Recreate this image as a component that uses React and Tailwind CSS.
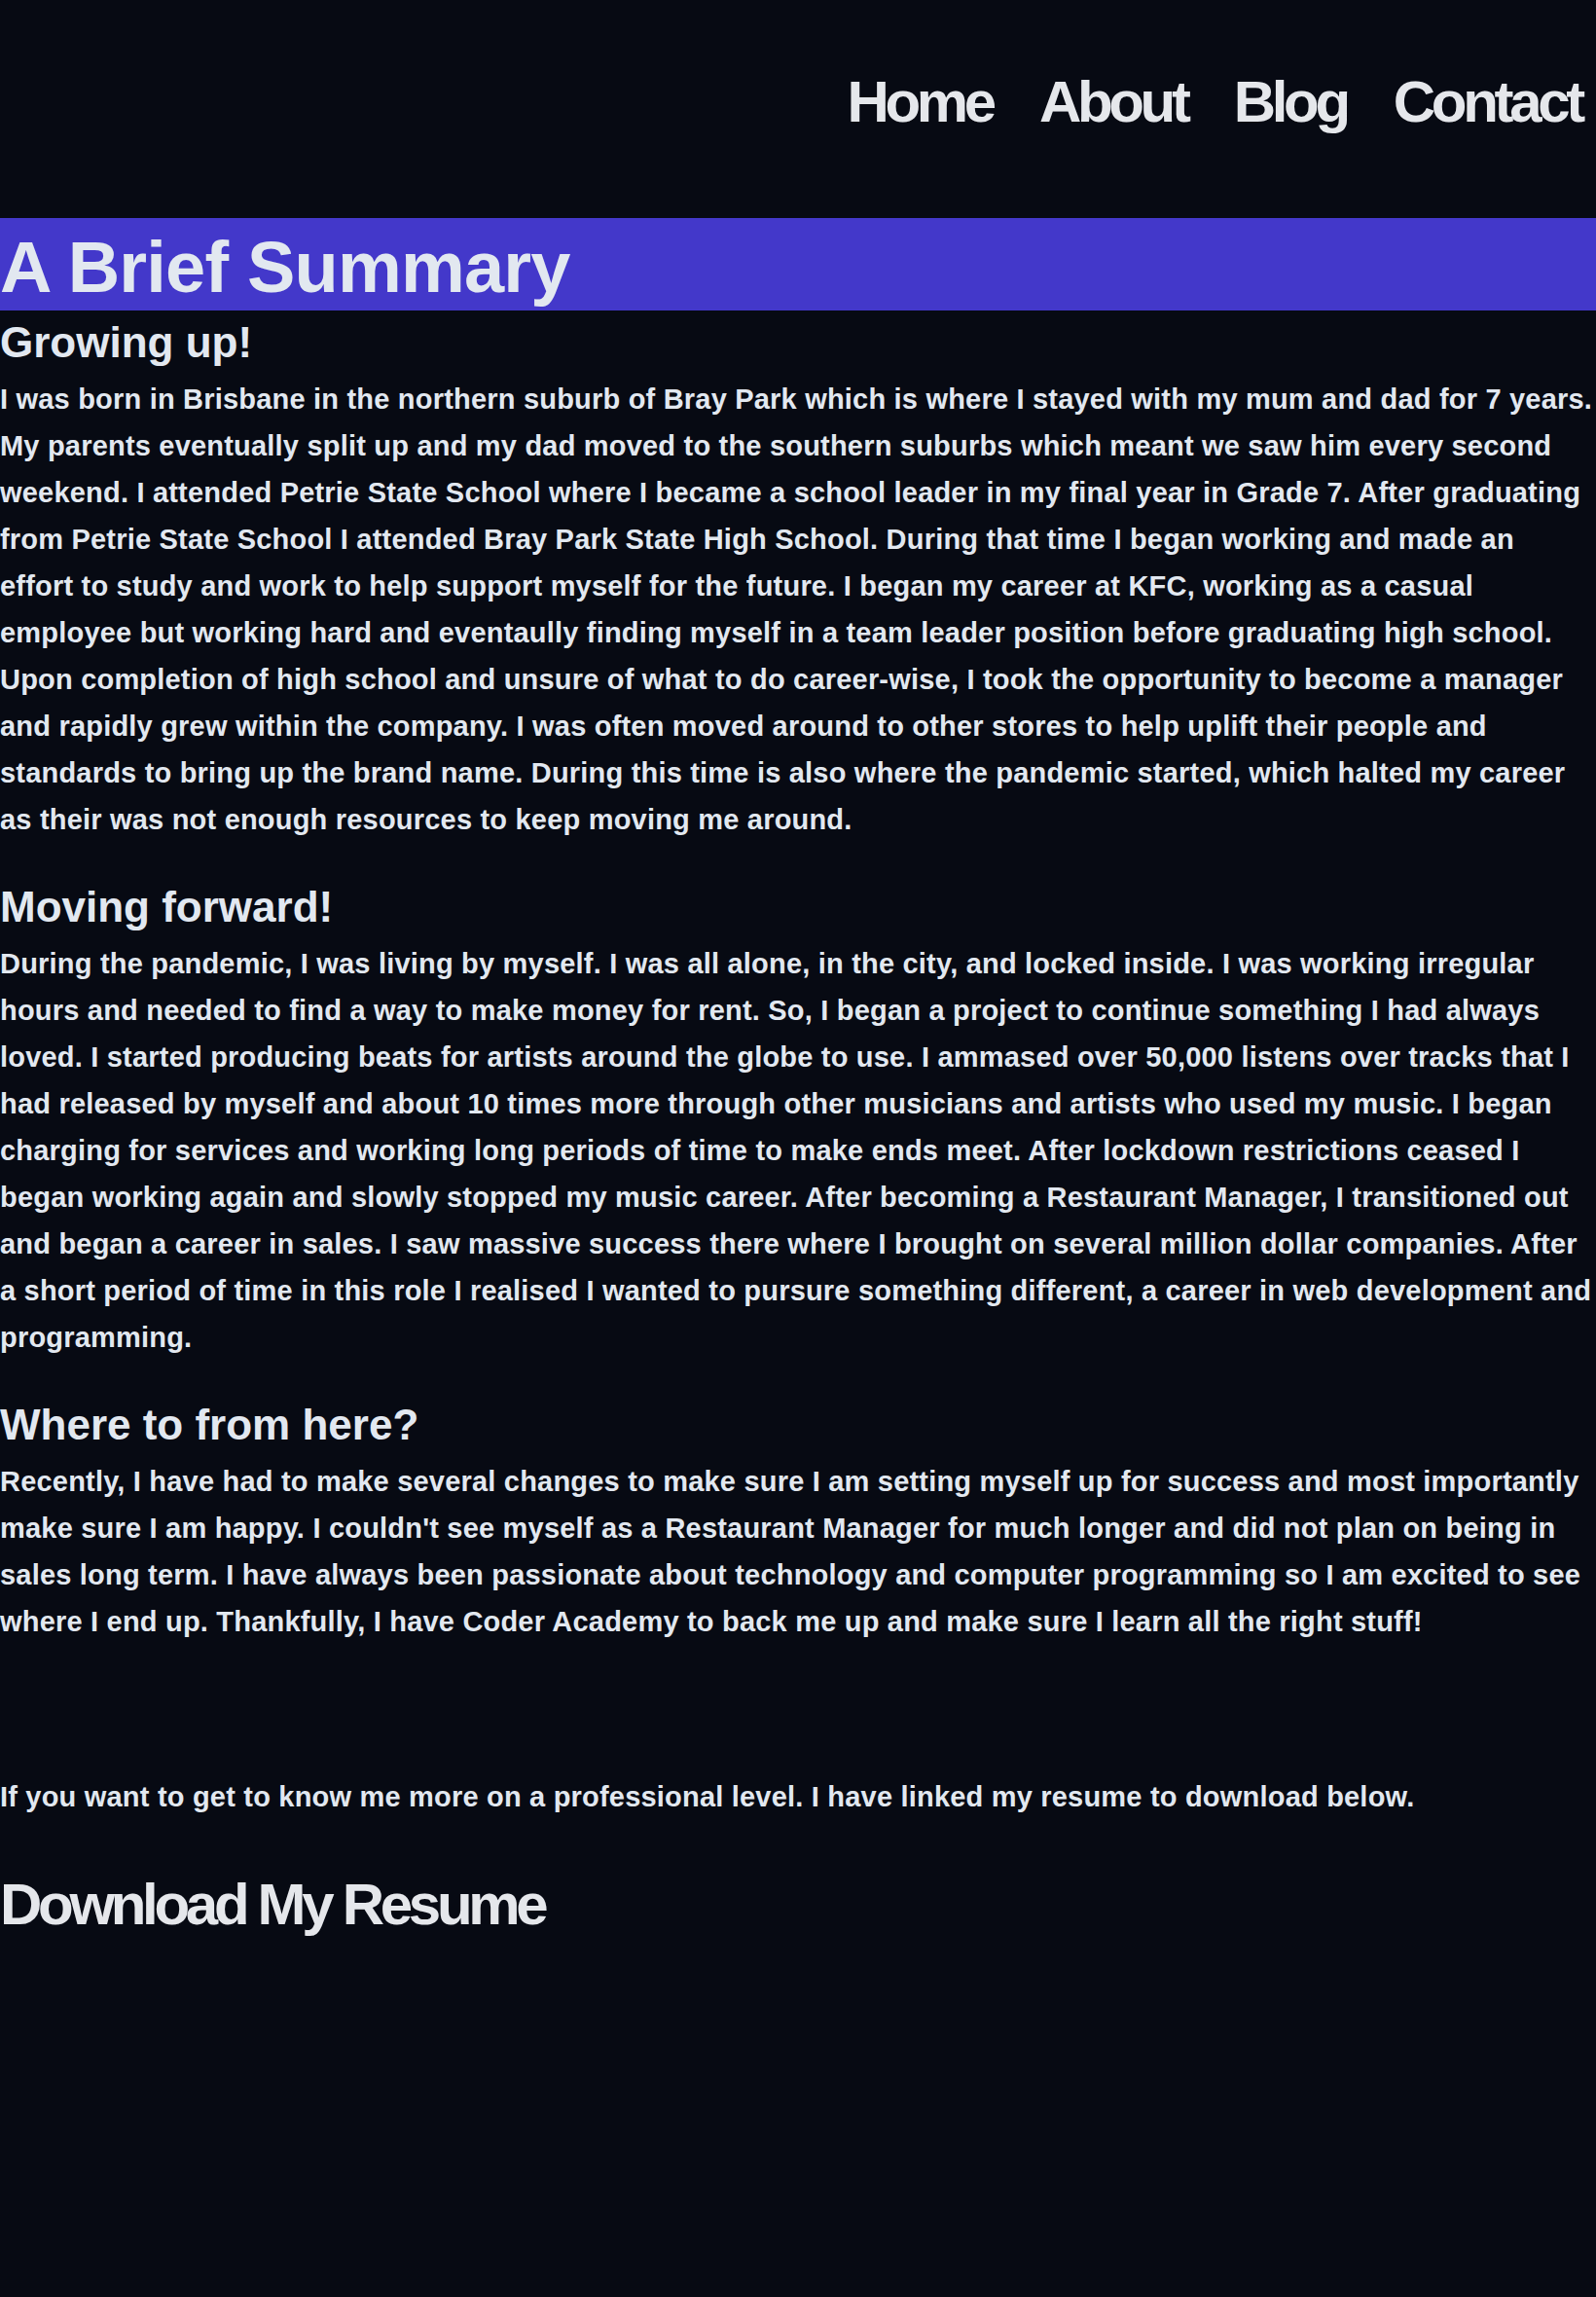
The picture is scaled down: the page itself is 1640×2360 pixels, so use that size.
const navLinks = ["Home", "About", "Blog", "Contact"];

const sections = [
  {
    title: "Growing up!",
    body: "I was born in Brisbane in the northern suburb of Bray Park which is where I stayed with my mum and dad for 7 years. My parents eventually split up and my dad moved to the southern suburbs which meant we saw him every second weekend. I attended Petrie State School where I became a school leader in my final year in Grade 7. After graduating from Petrie State School I attended Bray Park State High School. During that time I began working and made an effort to study and work to help support myself for the future. I began my career at KFC, working as a casual employee but working hard and eventaully finding myself in a team leader position before graduating high school. Upon completion of high school and unsure of what to do career-wise, I took the opportunity to become a manager and rapidly grew within the company. I was often moved around to other stores to help uplift their people and standards to bring up the brand name. During this time is also where the pandemic started, which halted my career as their was not enough resources to keep moving me around.",
  },
  {
    title: "Moving forward!",
    body: "During the pandemic, I was living by myself. I was all alone, in the city, and locked inside. I was working irregular hours and needed to find a way to make money for rent. So, I began a project to continue something I had always loved. I started producing beats for artists around the globe to use. I ammased over 50,000 listens over tracks that I had released by myself and about 10 times more through other musicians and artists who used my music. I began charging for services and working long periods of time to make ends meet. After lockdown restrictions ceased I began working again and slowly stopped my music career. After becoming a Restaurant Manager, I transitioned out and began a career in sales. I saw massive success there where I brought on several million dollar companies. After a short period of time in this role I realised I wanted to pursure something different, a career in web development and programming.",
  },
  {
    title: "Where to from here?",
    body: "Recently, I have had to make several changes to make sure I am setting myself up for success and most importantly make sure I am happy. I couldn't see myself as a Restaurant Manager for much longer and did not plan on being in sales long term. I have always been passionate about technology and computer programming so I am excited to see where I end up. Thankfully, I have Coder Academy to back me up and make sure I learn all the right stuff!",
  },
];

export default function App() {
  return (
    <div className="min-h-screen bg-[#070a13] text-slate-200 font-['Liberation_Sans',Arial,sans-serif] font-bold">
      {/* Header / nav */}
      <header className="h-[224px] pt-[75px] pr-[15px]">
        <nav className="flex justify-end gap-[48px]">
          {navLinks.map((link) => (
            <a
              key={link}
              href="#"
              className="text-[60px] leading-[60px] tracking-[-4.3px] text-gray-200"
            >
              {link}
            </a>
          ))}
        </nav>
      </header>

      {/* Summary banner */}
      <h1 className="h-[95px] bg-[#4338ca] pt-[6px] text-[74px] leading-[89px] tracking-[-0.8px]">
        A Brief Summary
      </h1>

      <main className="max-w-[1637px]">
        {sections.map((s, i) => (
          <section key={s.title} className={i === 0 ? "mt-[9px]" : "mt-[42px]"}>
            <h2 className="text-[44px] leading-[48px]">{s.title}</h2>
            <p className="mt-[10px] text-[29px] leading-[48px] tracking-[0.2px]">{s.body}</p>
          </section>
        ))}

        <p className="mt-[132px] text-[29px] leading-[48px] tracking-[0.2px]">
          If you want to get to know me more on a professional level. I have linked my resume to download below.
        </p>

        <h2 className="mt-[51px] text-[60px] leading-[72px] tracking-[-4.3px] text-gray-200">
          <a href="#">Download My Resume</a>
        </h2>
      </main>
    </div>
  );
}
